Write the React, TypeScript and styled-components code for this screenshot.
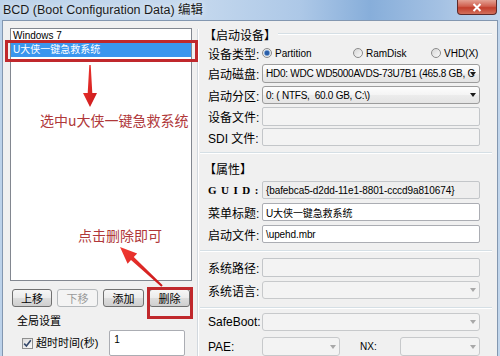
import React from 'react';
import styled, { createGlobalStyle } from 'styled-components';

const GlobalStyle = createGlobalStyle`
  html, body {
    margin: 0;
    padding: 0;
    overflow: hidden;
  }
  body {
    font-family: "Liberation Sans", "Noto Sans CJK SC", sans-serif;
    color: #000;
  }
`;

const Window = styled.div`
  width: 500px;
  height: 356px;
  overflow: hidden;
  display: flex;
  flex-direction: column;
  background: linear-gradient(90deg, #bcd2ea 0%, #c6d9ee 38%, #adc8e7 60%, #87aeda 74%, #a4c1e3 88%, #c2d6ec 100%);
`;

const TitleBar = styled.div`
  height: 20px;
  flex: none;
  display: flex;
  align-items: flex-start;
  padding-left: 3px;
`;

const Title = styled.span`
  font-size: 12.5px;
  line-height: 20px;
  color: #1b1b1b;
  text-shadow: 0 0 6px rgba(255, 255, 255, 0.9);
`;

const CloseButton = styled.div`
  margin-left: auto;
  margin-right: 3px;
  width: 40px;
  height: 15px;
  box-sizing: border-box;
  border: 1px solid #5d2a2a;
  border-top: none;
  border-radius: 0 0 4px 4px;
  background: linear-gradient(#e4a294, #d0604f 45%, #c23e2c 55%, #d2705c);
  display: flex;
  align-items: center;
  justify-content: center;
`;

const Body = styled.div`
  flex: 1;
  margin: 0 2px;
  border: 1px solid #8397b0;
  border-bottom: none;
  background: #f0f0f0;
  display: flex;
  min-height: 0;
`;

const LeftPane = styled.div`
  width: 194px;
  flex: none;
  position: relative;
  display: flex;
  flex-direction: column;
`;

const ListBox = styled.div`
  margin: 7px 0 0 7px;
  width: 182px;
  height: 257px;
  box-sizing: border-box;
  border: 1px solid #828790;
  background: #fff;
`;

const ListItem = styled.div<{ $selected?: boolean }>`
  height: 14px;
  line-height: 14px;
  font-size: 10px;
  padding-left: 2px;
  background: ${(p) => (p.$selected ? '#3a96ee' : 'transparent')};
  color: ${(p) => (p.$selected ? '#fff' : '#000')};
  white-space: nowrap;
`;

const ButtonRow = styled.div`
  display: flex;
  gap: 5px;
  margin: 8px 0 0 9px;
`;

const Button = styled.div<{ $w: number; $disabled?: boolean }>`
  width: ${(p) => p.$w}px;
  height: 18px;
  box-sizing: border-box;
  border: 1px solid ${(p) => (p.$disabled ? '#b5b9bc' : '#707070')};
  border-radius: 3px;
  background: ${(p) =>
    p.$disabled
      ? '#f4f4f4'
      : 'linear-gradient(#f6f6f6, #ebebeb 50%, #dddddd 51%, #cfcfcf)'};
  color: ${(p) => (p.$disabled ? '#9a9a9a' : '#000')};
  font-size: 11px;
  display: flex;
  align-items: center;
  justify-content: center;
`;

const GroupCaption = styled.div`
  margin: 7px 0 0 14px;
  font-size: 11px;
  line-height: 14px;
`;

const CheckRow = styled.div`
  display: flex;
  align-items: flex-start;
  margin: 2px 0 0 19px;
`;

const CheckBox = styled.span`
  width: 11px;
  height: 11px;
  box-sizing: border-box;
  margin-top: 8px;
  border: 1px solid #8e8f8f;
  background: linear-gradient(135deg, #dcdcdc, #fbfbfb);
  display: flex;
  align-items: center;
  justify-content: center;
`;

const CheckText = styled.span`
  margin: 6px 0 0 3px;
  font-size: 11px;
  line-height: 15px;
`;

const SmallInput = styled.div`
  margin-left: 11px;
  width: 76px;
  height: 26px;
  box-sizing: border-box;
  border: 1px solid #abadb3;
  border-radius: 2px;
  background: #fff;
  font-size: 10px;
  padding: 3px 0 0 4px;
`;

const Overlay = styled.svg`
  position: absolute;
  left: 0;
  top: 0;
  overflow: visible;
  pointer-events: none;
`;

const Note = styled.span<{ $left: number; $top: number }>`
  position: absolute;
  left: ${(p) => p.$left}px;
  top: ${(p) => p.$top}px;
  font-size: 14px;
  line-height: 18px;
  color: #b0383a;
  white-space: nowrap;
  font-family: "Noto Sans CJK SC", sans-serif;
`;

const Splitter = styled.div`
  width: 0;
  margin-top: 8px;
  border-left: 1px solid #d2d8de;
  border-right: 1px solid #ffffff;
`;

const RightPane = styled.div`
  flex: 1;
  display: flex;
  flex-direction: column;
  padding: 0 5px 0 9px;
`;

const GroupHeader = styled.div<{ $mt: number; $line?: boolean }>`
  display: flex;
  align-items: center;
  height: 14px;
  margin-top: ${(p) => p.$mt}px;
  margin-left: -4px;
  font-size: 12px;
  font-family: "Noto Sans CJK SC", sans-serif;
  white-space: nowrap;
  &::after {
    content: '';
    display: ${(p) => (p.$line ? 'block' : 'none')};
    flex: 1;
    margin-left: 2px;
    border-top: 1px solid #d5dfe5;
    border-bottom: 1px solid #ffffff;
  }
`;

const Separator = styled.div<{ $mt: number }>`
  margin: ${(p) => p.$mt}px 0 0 -8px;
  border-top: 1px solid #d5dfe5;
  border-bottom: 1px solid #ffffff;
`;

const Row = styled.div<{ $mt: number; $h: number }>`
  display: flex;
  align-items: center;
  margin-top: ${(p) => p.$mt}px;
  height: ${(p) => p.$h}px;
`;

const Label = styled.span<{ $w?: number }>`
  width: ${(p) => p.$w ?? 54}px;
  flex: none;
  font-size: 12px;
  white-space: nowrap;
`;

const GuidLabel = styled(Label)`
  font-family: "Liberation Serif", serif;
  font-weight: bold;
  font-size: 11px;
  letter-spacing: 4.5px;
`;

const Field = styled.div<{ $kind: 'edit' | 'readonly' | 'disabled' }>`
  width: 218px;
  height: 100%;
  box-sizing: border-box;
  border: 1px solid ${(p) => (p.$kind === 'edit' ? '#abadb3' : '#c3c6c9')};
  border-radius: 2px;
  background: ${(p) => (p.$kind === 'edit' ? '#ffffff' : p.$kind === 'readonly' ? '#eeeeee' : '#f3f3f3')};
  font-size: 10px;
  letter-spacing: -0.1px;
  display: flex;
  align-items: center;
  padding-left: 3px;
  white-space: nowrap;
  overflow: hidden;
`;

const Combo = styled.div<{ $w?: number; $disabled?: boolean }>`
  width: ${(p) => p.$w ?? 218}px;
  height: 100%;
  box-sizing: border-box;
  border: 1px solid ${(p) => (p.$disabled ? '#c7c9cb' : '#9c9c9c')};
  border-radius: 3px;
  background: ${(p) =>
    p.$disabled ? '#f3f3f3' : 'linear-gradient(#fdfdfd, #f4f4f4 50%, #ececec 51%, #e4e4e4)'};
  font-size: 10px;
  letter-spacing: -0.25px;
  display: flex;
  align-items: center;
  padding: 0 3px 0 3px;
  white-space: nowrap;
  overflow: hidden;
  span {
    flex: 1;
    min-width: 0;
  }
  &::after {
    content: '';
    flex: none;
    margin-left: 2px;
    border-left: 3.5px solid transparent;
    border-right: 3.5px solid transparent;
    border-top: 4px solid ${(p) => (p.$disabled ? '#a8a8a8' : '#1a1a1a')};
  }
`;

const RadioGroup = styled.div`
  display: flex;
  align-items: center;
  font-size: 10px;
`;

const RadioOption = styled.label<{ $w: number }>`
  width: ${(p) => p.$w}px;
  display: flex;
  align-items: center;
  gap: 3px;
`;

const RadioDot = styled.span<{ $on?: boolean }>`
  width: 10px;
  height: 10px;
  box-sizing: border-box;
  border-radius: 50%;
  border: 1px solid #8b8b8b;
  background: ${(p) =>
    p.$on
      ? 'radial-gradient(circle, #2a5ea8 0 2px, #7aa4d8 2.5px, #e8e8e8 3.5px, #fafafa)'
      : 'linear-gradient(135deg, #d6d6d6, #fafafa)'};
`;

const NxLabel = styled.span`
  width: 40px;
  margin-left: 20px;
  font-size: 10px;
`;

export default function App() {
  return (
    <>
      <GlobalStyle />
      <Window>
        <TitleBar>
          <Title>BCD (Boot Configuration Data) 编辑</Title>
          <CloseButton>
            <svg width="10" height="9" viewBox="0 0 10 9">
              <path d="M1.5 1 L8.5 8 M8.5 1 L1.5 8" stroke="#fff" strokeWidth="2" />
            </svg>
          </CloseButton>
        </TitleBar>
        <Body>
          <LeftPane>
            <ListBox>
              <ListItem>Windows 7</ListItem>
              <ListItem $selected>U大侠一键急救系统</ListItem>
            </ListBox>
            <ButtonRow>
              <Button $w={40}>上移</Button>
              <Button $w={41} $disabled>下移</Button>
              <Button $w={41}>添加</Button>
              <Button $w={41}>删除</Button>
            </ButtonRow>
            <GroupCaption>全局设置</GroupCaption>
            <CheckRow>
              <CheckBox>
                <svg width="9" height="9" viewBox="0 0 9 9">
                  <path d="M1.2 4.6 L3.4 7 L7.8 1.2" fill="none" stroke="#34486a" strokeWidth="1.6" />
                </svg>
              </CheckBox>
              <CheckText>超时时间(秒)</CheckText>
              <SmallInput>1</SmallInput>
            </CheckRow>

            <Overlay width="194" height="335" viewBox="3 21 194 335">
              <defs>
                <linearGradient id="arrowFill" x1="0" y1="0" x2="1" y2="1">
                  <stop offset="0" stopColor="#f23a32" />
                  <stop offset="1" stopColor="#c8171a" />
                </linearGradient>
              </defs>
              <rect x="6.5" y="41.5" width="190" height="19" fill="none" stroke="#c0282c" strokeWidth="3" />
              <rect x="148.5" y="288.5" width="43" height="29" fill="none" stroke="#c0282c" strokeWidth="3" />
              <polygon
                points="89.3,65 90.7,65 92.3,93 97,93 90,107 83,93 87.7,93"
                fill="url(#arrowFill)"
              />
              <polygon
                points="120,247 137.2,253.5 133.8,257.1 162.7,285.3 161.3,286.7 131,260.1 127.6,263.7"
                fill="url(#arrowFill)"
              />
            </Overlay>
            <Note $left={37} $top={90}>选中u大侠一键急救系统</Note>
            <Note $left={75} $top={205}>点击删除即可</Note>
          </LeftPane>

          <Splitter />

          <RightPane>
            <GroupHeader $mt={6} $line>【启动设备】</GroupHeader>
            <Row $mt={5} $h={14}>
              <Label>设备类型:</Label>
              <RadioGroup>
                <RadioOption $w={91}>
                  <RadioDot $on />
                  Partition
                </RadioOption>
                <RadioOption $w={78}>
                  <RadioDot />
                  RamDisk
                </RadioOption>
                <RadioOption $w={48}>
                  <RadioDot />
                  VHD(X)
                </RadioOption>
              </RadioGroup>
            </Row>
            <Row $mt={4} $h={19}>
              <Label>启动磁盘:</Label>
              <Combo>
                <span>HD0: WDC WD5000AVDS-73U7B1 (465.8 GB, C</span>
              </Combo>
            </Row>
            <Row $mt={3} $h={18}>
              <Label>启动分区:</Label>
              <Combo>
                <span>0: ( NTFS,&nbsp; 60.0 GB, C:\)</span>
              </Combo>
            </Row>
            <Row $mt={3} $h={19}>
              <Label>设备文件:</Label>
              <Field $kind="disabled" />
            </Row>
            <Row $mt={2} $h={18}>
              <Label>SDI 文件:</Label>
              <Field $kind="disabled" />
            </Row>

            <Separator $mt={6} />

            <GroupHeader $mt={7}>【属性】</GroupHeader>
            <Row $mt={6} $h={18}>
              <GuidLabel>GUID:</GuidLabel>
              <Field $kind="readonly">{'{bafebca5-d2dd-11e1-8801-cccd9a810674}'}</Field>
            </Row>
            <Row $mt={4} $h={18}>
              <Label>菜单标题:</Label>
              <Field $kind="edit">U大侠一键急救系统</Field>
            </Row>
            <Row $mt={4} $h={18}>
              <Label>启动文件:</Label>
              <Field $kind="edit">\upehd.mbr</Field>
            </Row>

            <Separator $mt={7} />

            <Row $mt={6} $h={19}>
              <Label>系统路径:</Label>
              <Field $kind="disabled" />
            </Row>
            <Row $mt={4} $h={18}>
              <Label>系统语言:</Label>
              <Combo $disabled>
                <span />
              </Combo>
            </Row>

            <Separator $mt={8} />

            <Row $mt={4} $h={18}>
              <Label>SafeBoot:</Label>
              <Combo $disabled>
                <span />
              </Combo>
            </Row>
            <Row $mt={6} $h={19}>
              <Label>PAE:</Label>
              <Combo $w={78} $disabled>
                <span />
              </Combo>
              <NxLabel>NX:</NxLabel>
              <Combo $w={80} $disabled>
                <span />
              </Combo>
            </Row>
          </RightPane>
        </Body>
      </Window>
    </>
  );
}
